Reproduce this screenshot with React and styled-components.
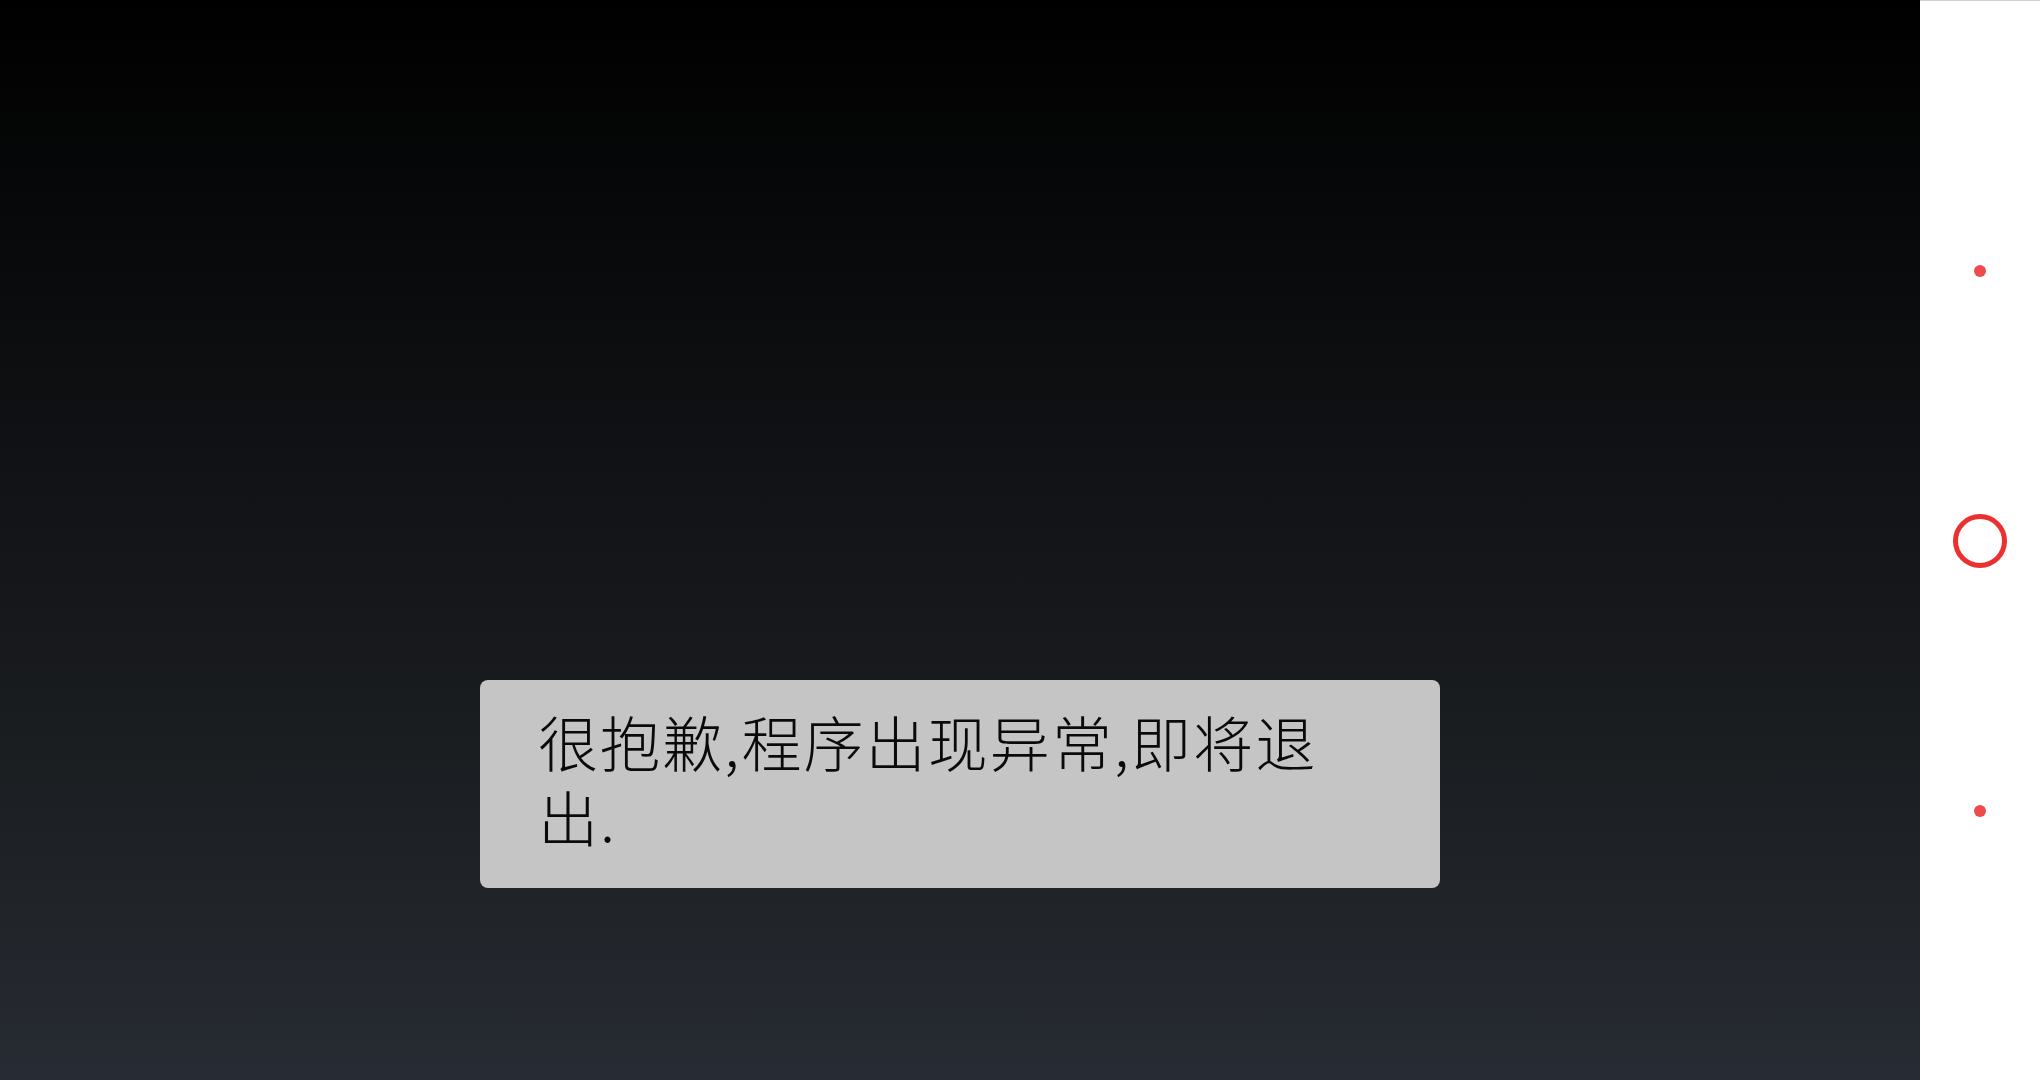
import React from "react";
import styled, { createGlobalStyle } from "styled-components";

const Global = createGlobalStyle`
  html, body { margin: 0; padding: 0; width: 2040px; height: 1080px; overflow: hidden; }
  #root { width: 2040px; height: 1080px; }
`;

const Screen = styled.div`
  display: flex;
  width: 2040px;
  height: 1080px;
`;

const Stage = styled.main`
  flex: 0 0 1920px;
  display: flex;
  flex-direction: column;
  align-items: center;
  padding-top: 680px;
  box-sizing: border-box;
  background: linear-gradient(180deg, #000000 0%, #111316 45%, #1f2226 80%, #272b33 100%);
`;

const Toast = styled.div`
  width: 960px;
  height: 208px;
  box-sizing: border-box;
  padding: 23px 110px 0 58px;
  background: #c4c5c4;
  border-radius: 8px;
  color: #0a0a0a;
  font-family: "Noto Sans CJK SC", "Noto Sans", sans-serif;
  font-weight: 300;
  font-size: 60px;
  letter-spacing: 2.1px;
  line-height: 75px;
`;

const NavBar = styled.nav`
  flex: 1;
  display: flex;
  flex-direction: column;
  align-items: center;
  background: #fff;
  border-top: 1px solid #cfcfcf;
  padding-top: 264px;
  box-sizing: border-box;
`;

const Dot = styled.span`
  width: 12px;
  height: 12px;
  border-radius: 50%;
  background: #ef4b4b;
`;

const Ring = styled.span`
  width: 54px;
  height: 54px;
  box-sizing: border-box;
  border-radius: 50%;
  border: 5px solid #ec2f2f;
  margin: ${(p) => p.$m};
`;

export default function App() {
  return (
    <>
      <Global />
      <Screen>
        <Stage>
          <Toast>很抱歉,程序出现异常,即将退出.</Toast>
        </Stage>
        <NavBar>
          <Dot />
          <Ring $m="237px 0 237px" />
          <Dot />
        </NavBar>
      </Screen>
    </>
  );
}
